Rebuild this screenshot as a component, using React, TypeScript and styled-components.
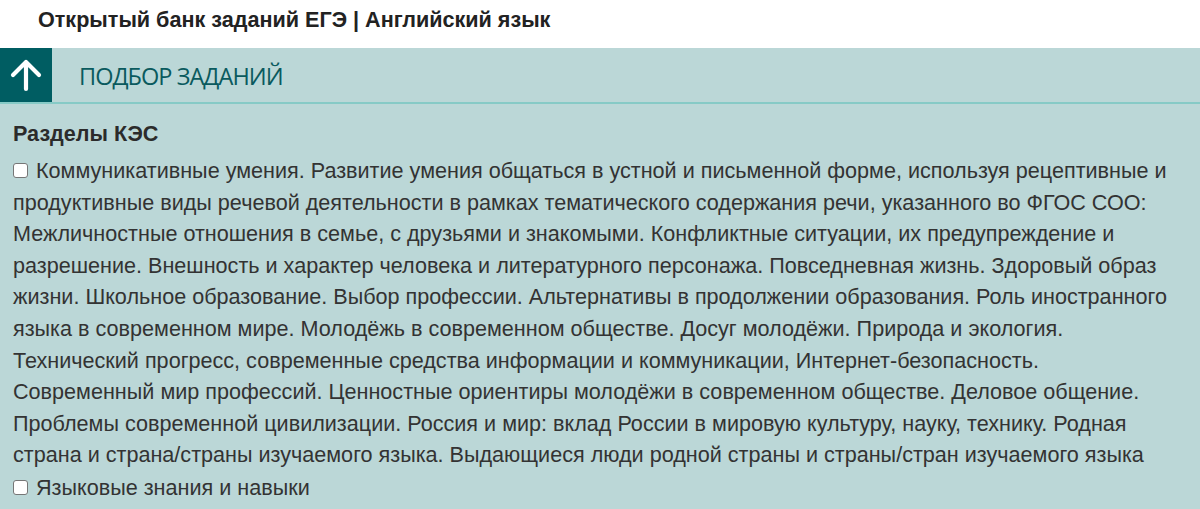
import styled, { createGlobalStyle } from "styled-components";

const GlobalStyle = createGlobalStyle`
  html, body {
    margin: 0;
    padding: 0;
    background: #ffffff;
  }
  body {
    font-family: "Liberation Sans", Arial, sans-serif;
    color: #333333;
  }
`;

const Page = styled.div`
  width: 1200px;
  height: 509px;
  overflow: hidden;
  background: #bbd7d7;
`;

const TopTitle = styled.div`
  background: #ffffff;
  height: 48px;
  box-sizing: border-box;
  padding: 7px 0 0 38px;
  font-size: 21.6px;
  font-weight: bold;
  line-height: 26px;
  color: #222222;
`;

const HeaderBar = styled.div`
  display: flex;
  align-items: stretch;
  height: 54px;
  border-bottom: 2px solid #86cac6;
  box-sizing: content-box;
`;

const UpButton = styled.div`
  width: 52px;
  background: #005d62;
  display: flex;
  align-items: center;
  justify-content: center;
`;

const HeaderTitle = styled.div`
  display: flex;
  align-items: center;
  padding-left: 27px;
  padding-top: 2px;
  font-family: "Open Sans", sans-serif;
  font-size: 23.5px;
  letter-spacing: -0.95px;
  color: #0a5a5e;
  text-transform: uppercase;
`;

const Content = styled.div`
  padding: 15px 26px 0 13px;
`;

const SectionTitle = styled.div`
  font-size: 21.6px;
  font-weight: bold;
  line-height: 30px;
  margin-bottom: 6px;
  color: #2b2b2b;
`;

const Option = styled.label`
  display: block;
  font-size: 21.6px;
  line-height: 31.6px;
  color: #333333;
`;

const Check = styled.input`
  appearance: none;
  box-sizing: border-box;
  width: 15px;
  height: 15px;
  margin: 0 8px 0 0;
  vertical-align: 0;
  background: #ffffff;
  border: 1.5px solid #767676;
  border-radius: 3px;
`;

const Spacer = styled.div`
  height: 1px;
`;

export default function App() {
    return (
        <>
            <GlobalStyle/>
            <Page>
                <TopTitle>Открытый банк заданий ЕГЭ | Английский язык</TopTitle>
                <HeaderBar>
                    <UpButton>
                        <svg width="36" height="36" viewBox="0 0 36 36" fill="none">
                            <path d="M18 32 V5 M5 18 L18 5 L31 18" stroke="#ffffff" strokeWidth="4.2"
                                  strokeLinecap="round" strokeLinejoin="round"/>
                        </svg>
                    </UpButton>
                    <HeaderTitle>Подбор заданий</HeaderTitle>
                </HeaderBar>
                <Content>
                    <SectionTitle>Разделы КЭС</SectionTitle>
                    <Option>
                        <Check type="checkbox"/>
                        Коммуникативные умения. Развитие умения общаться в устной и письменной форме, используя
                        рецептивные и продуктивные виды речевой деятельности в рамках тематического содержания речи,
                        указанного во ФГОС СОО: Межличностные отношения в семье, с друзьями и знакомыми. Конфликтные
                        ситуации, их предупреждение и разрешение. Внешность и характер человека и литературного
                        персонажа. Повседневная жизнь. Здоровый образ жизни. Школьное образование. Выбор профессии.
                        Альтернативы в продолжении образования. Роль иностранного языка в современном мире. Молодёжь в
                        современном обществе. Досуг молодёжи. Природа и экология. Технический прогресс, современные
                        средства информации и коммуникации, Интернет-безопасность. Современный мир профессий.
                        Ценностные ориентиры молодёжи в современном обществе. Деловое общение. Проблемы современной
                        цивилизации. Россия и мир: вклад России в мировую культуру, науку, технику. Родная страна и
                        страна/страны изучаемого языка. Выдающиеся люди родной страны и страны/стран изучаемого языка
                    </Option>
                    <Spacer/>
                    <Option>
                        <Check type="checkbox"/>
                        Языковые знания и навыки
                    </Option>
                </Content>
            </Page>
        </>
    );
}
